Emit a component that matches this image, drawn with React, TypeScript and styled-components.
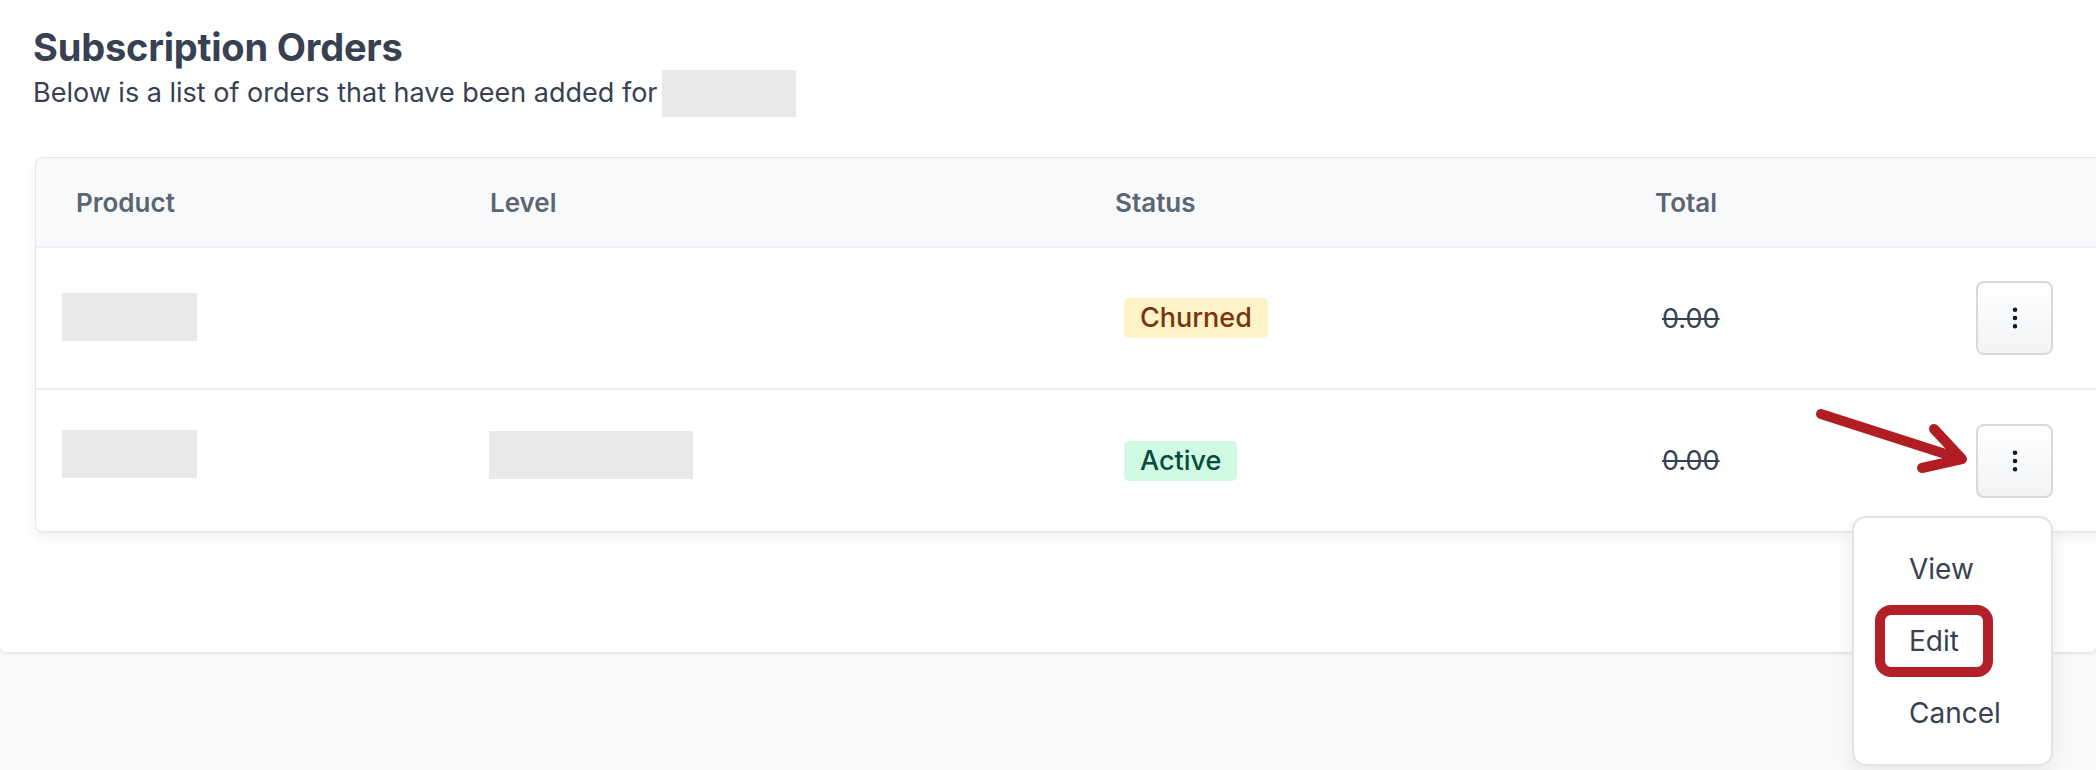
import React from "react";
import styled, { createGlobalStyle } from "styled-components";
import { EllipsisVertical } from "lucide-react";

const GlobalStyle = createGlobalStyle`
  html, body {
    margin: 0;
    padding: 0;
    background: #fafafa;
  }
  body {
    font-family: Inter, "Noto Sans", "Liberation Sans", sans-serif;
    -webkit-font-smoothing: antialiased;
  }
  *, *::before, *::after { box-sizing: border-box; }
`;

const Page = styled.div`
  position: relative;
  width: 100vw;
  height: 100vh;
  overflow: hidden;
  background: #fafafa;
`;

const Panel = styled.section`
  background: #ffffff;
  padding: 24px 0 120px 33px;
  border-radius: 0 0 6px 6px;
  box-shadow: 0 1px 4px rgba(0, 0, 0, 0.12);
`;

const Title = styled.h1`
  margin: 0;
  font-size: 38px;
  line-height: 46px;
  font-weight: 700;
  color: #374151;
  letter-spacing: -0.2px;
`;

const SubtitleRow = styled.div`
  display: flex;
  align-items: center;
  gap: 4px;
  height: 47px;
`;

const Subtitle = styled.p`
  margin: 0 0 2px 0;
  font-size: 27px;
  line-height: 34px;
  font-weight: 400;
  color: #374151;
`;

const Redacted = styled.span<{ $w: number; $shift?: number; $offset?: number }>`
  display: block;
  width: ${(p) => p.$w}px;
  height: 48px;
  background: #e9e9e9;
  margin-left: ${(p) => p.$offset ?? 0}px;
  margin-bottom: ${(p) => (p.$shift ?? 0) * 2}px;
`;

const SubtitleRedacted = styled.span`
  display: block;
  width: 134px;
  height: 47px;
  background: #e9e9e9;
`;

const Card = styled.div`
  margin-top: 40px;
  margin-left: 2px;
  width: 2100px;
  background: #ffffff;
  border: 1px solid #e6e8eb;
  border-radius: 8px;
  box-shadow: 0 6px 12px rgba(17, 24, 39, 0.05), 0 1px 2px rgba(17, 24, 39, 0.04);
`;

const GridRow = styled.div<{ $head?: boolean; $h: number; $divider?: boolean }>`
  display: grid;
  grid-template-columns: 414px 625px 540px 1fr auto;
  align-items: center;
  height: ${(p) => p.$h}px;
  background: ${(p) => (p.$head ? "#f7f9fa" : "transparent")};
  border-bottom: ${(p) => (p.$divider ? "2px solid #eceef1" : "none")};
  border-radius: ${(p) => (p.$head ? "8px 8px 0 0" : "0")};
`;

const HeadCell = styled.div`
  padding-left: 40px;
  font-size: 26px;
  font-weight: 600;
  color: #5b6573;
`;

const Cell = styled.div<{ $end?: boolean }>`
  display: flex;
  align-items: center;
  padding-left: 40px;
  padding-right: ${(p) => (p.$end ? "81px" : "0")};
  justify-content: flex-start;
`;

const Badge = styled.span<{ $tone: "amber" | "green" }>`
  display: inline-block;
  margin-left: 9px;
  height: 40px;
  line-height: 40px;
  padding: 0 16px;
  border-radius: 5px;
  font-size: 27px;
  font-weight: 500;
  background: ${(p) => (p.$tone === "amber" ? "#fef3c7" : "#d1fae5")};
  color: ${(p) => (p.$tone === "amber" ? "#78350f" : "#064e3b")};
`;

const Amount = styled.span`
  margin-left: 7px;
  font-size: 27px;
  color: #374151;
  text-decoration: line-through;
  text-decoration-thickness: 2px;
`;

const ActionWrap = styled.div`
  position: relative;
  width: 77px;
  height: 74px;
`;

const KebabButton = styled.button`
  width: 77px;
  height: 74px;
  display: flex;
  align-items: center;
  justify-content: center;
  padding: 0;
  border: 2px solid #d6dade;
  border-radius: 8px;
  background: linear-gradient(180deg, #ffffff 0%, #f1f3f5 100%);
  color: #111827;
  cursor: pointer;
`;

const Menu = styled.ul`
  position: absolute;
  top: calc(100% + 18px);
  right: 0;
  z-index: 10;
  width: 201px;
  margin: 0;
  padding: 15px 0;
  list-style: none;
  background: #ffffff;
  border: 2px solid #e0e3e7;
  border-radius: 14px;
  box-shadow: 0 10px 24px rgba(17, 24, 39, 0.08);
`;

const MenuItem = styled.li<{ $marked?: boolean }>`
  position: relative;
  height: 72px;
  display: flex;
  align-items: center;
  padding-left: 55px;
  font-size: 28px;
  color: #374151;

  &::after {
    content: "";
    display: ${(p) => (p.$marked ? "block" : "none")};
    position: absolute;
    left: 21px;
    top: 0;
    width: 118px;
    height: 72px;
    box-sizing: border-box;
    border: 10px solid #b3202a;
    border-radius: 16px;
  }
`;

const ArrowSvg = styled.svg`
  position: absolute;
  left: -165px;
  top: -20px;
  width: 170px;
  height: 80px;
  overflow: visible;
  pointer-events: none;
`;

const Arrow = () => (
  <ArrowSvg viewBox="0 0 170 80">
    <g fill="none" stroke="#b01e24" strokeWidth={10} strokeLinecap="round" strokeLinejoin="round">
      <path d="M10 10 L150 55" />
      <path d="M123 25 L151 55 L111 64" />
    </g>
  </ArrowSvg>
);

const Kebab = () => (
  <KebabButton aria-label="Actions">
    <EllipsisVertical size={28} strokeWidth={1.9} />
  </KebabButton>
);

export default function App() {
  return (
    <Page>
      <GlobalStyle />
      <Panel>
        <Title>Subscription Orders</Title>
        <SubtitleRow>
          <Subtitle>Below is a list of orders that have been added for</Subtitle>
          <SubtitleRedacted />
        </SubtitleRow>

        <Card>
          <GridRow $head $h={90} $divider>
            <HeadCell>Product</HeadCell>
            <HeadCell>Level</HeadCell>
            <HeadCell>Status</HeadCell>
            <HeadCell>Total</HeadCell>
            <HeadCell />
          </GridRow>

          <GridRow $h={142} $divider>
            <Cell>
              <Redacted $w={135} $offset={-14} $shift={1} />
            </Cell>
            <Cell />
            <Cell>
              <Badge $tone="amber">Churned</Badge>
            </Cell>
            <Cell>
              <Amount>0.00</Amount>
            </Cell>
            <Cell $end>
              <ActionWrap>
                <Kebab />
              </ActionWrap>
            </Cell>
          </GridRow>

          <GridRow $h={141}>
            <Cell>
              <Redacted $w={135} $offset={-14} $shift={7} />
            </Cell>
            <Cell>
              <Redacted $w={204} $offset={-1} $shift={6} />
            </Cell>
            <Cell>
              <Badge $tone="green">Active</Badge>
            </Cell>
            <Cell>
              <Amount>0.00</Amount>
            </Cell>
            <Cell $end>
              <ActionWrap>
                <Arrow />
                <Kebab />
                <Menu>
                  <MenuItem>View</MenuItem>
                  <MenuItem $marked>Edit</MenuItem>
                  <MenuItem>Cancel</MenuItem>
                </Menu>
              </ActionWrap>
            </Cell>
          </GridRow>
        </Card>
      </Panel>
    </Page>
  );
}
